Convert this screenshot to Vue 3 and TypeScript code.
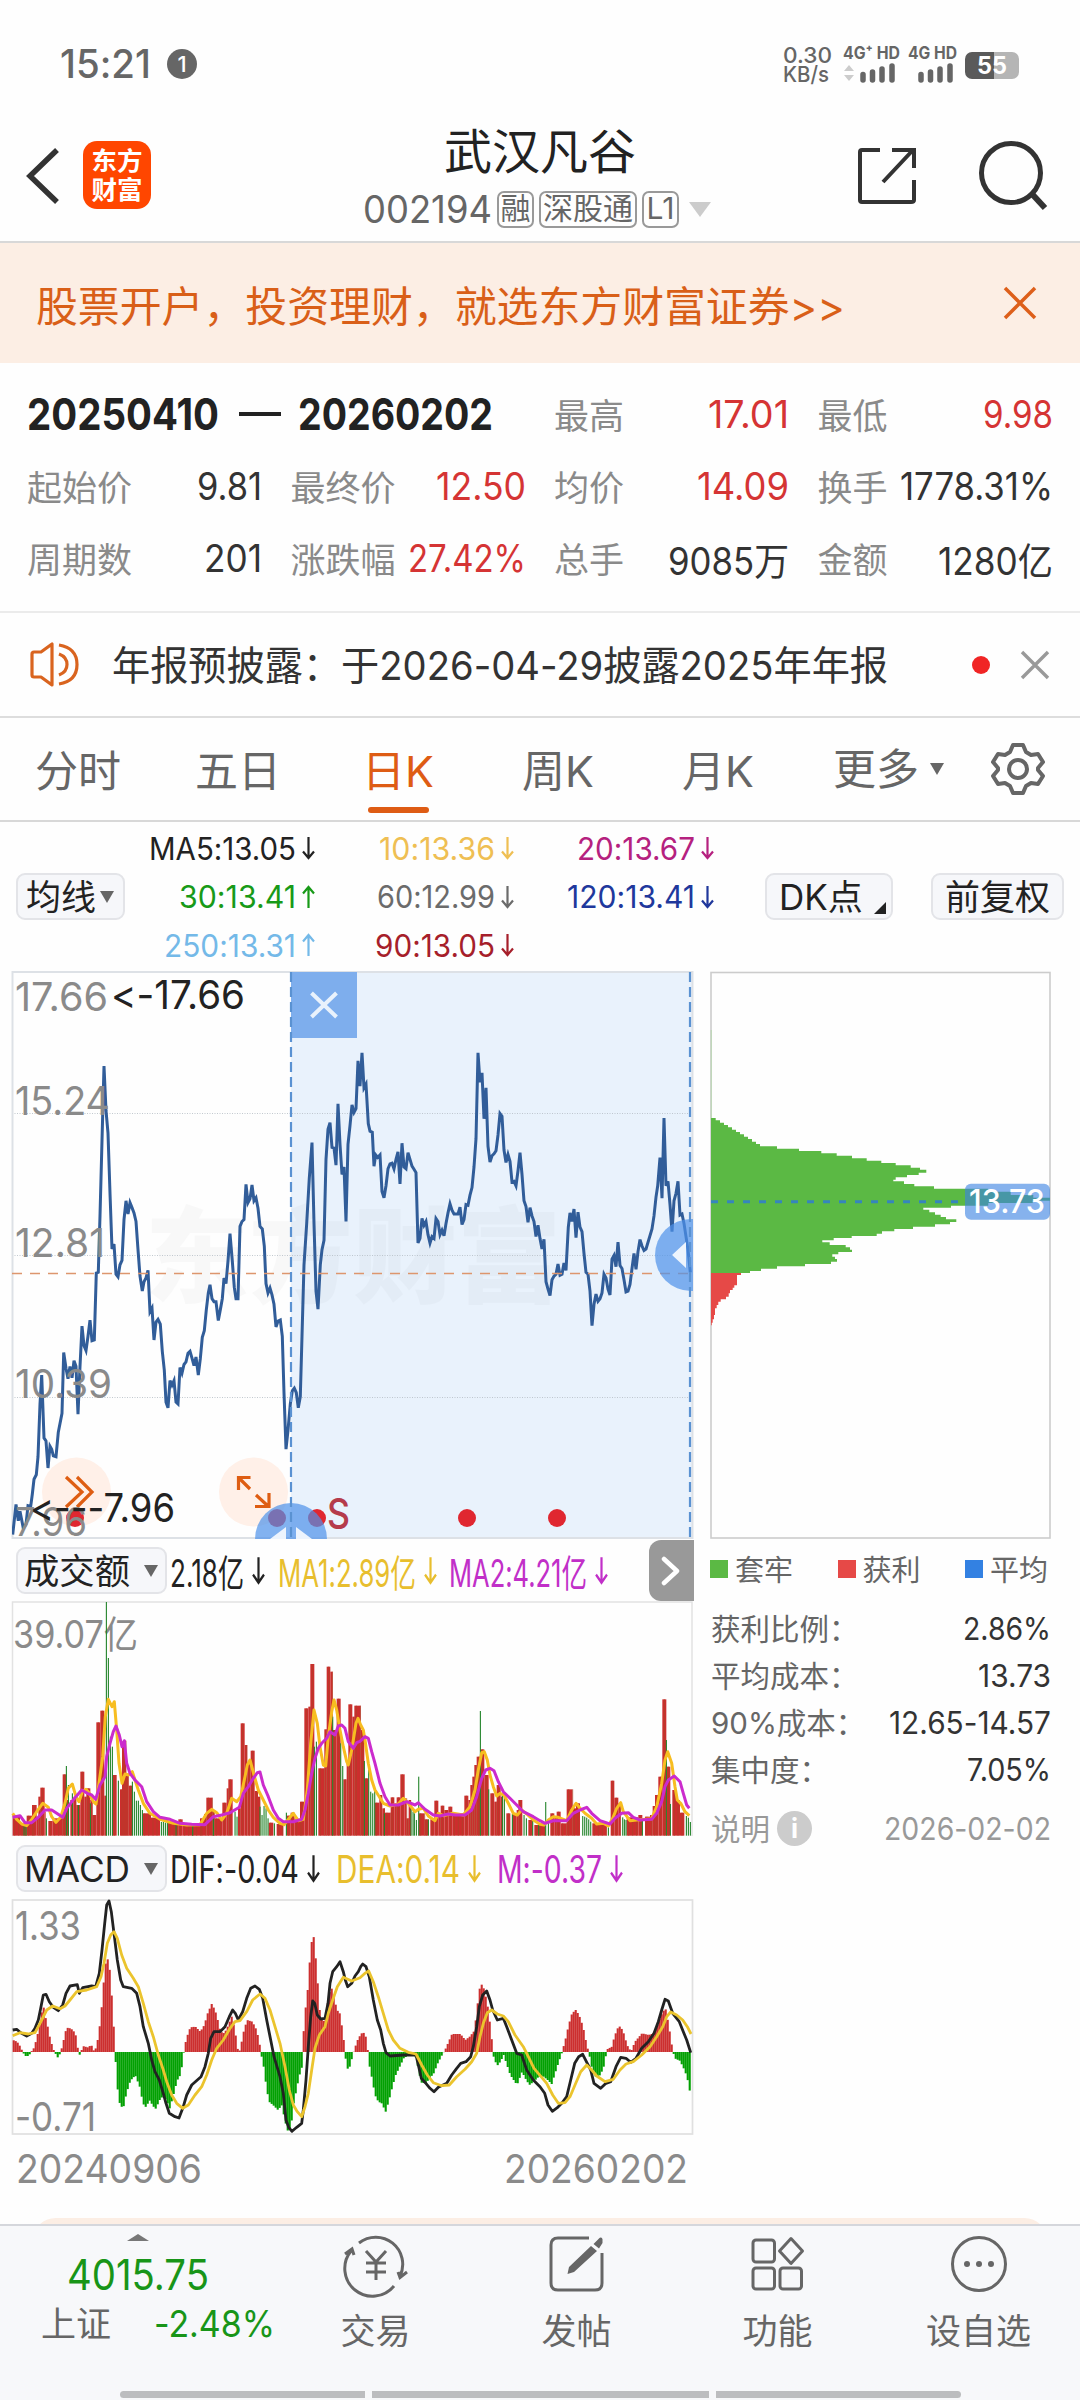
<script setup lang="ts">
import { h, type Directive, type FunctionalComponent } from 'vue'

/* Condenses or widens a run of text horizontally to the given width. */
const vFit: Directive<HTMLElement, number> = {
  mounted(el, { value }) {
    const natural = el.getBoundingClientRect().width
    if (!natural) return
    el.style.transform = `scaleX(${value / natural})`
    el.style.marginRight = `${value - natural}px`
  },
}

const Arrow: FunctionalComponent<{ up?: boolean; size?: number }> = (p) =>
  h(
    'svg',
    { width: 13, height: p.size ?? 24, viewBox: '0 0 13 24', preserveAspectRatio: 'none', style: 'flex:none' },
    [
      h('path', {
        d: p.up ? 'M6.5 23V2M1 8.5L6.5 2L12 8.5' : 'M6.5 1V22M1 15.5L6.5 22L12 15.5',
        fill: 'none',
        stroke: 'currentColor',
        'stroke-width': 2.2,
      }),
    ],
  )
Arrow.props = ['up', 'size']

interface Stat { label: string; value: string; w: number; red?: boolean }
const stats: Stat[] = [
  { label: '最高', value: '17.01', w: 81, red: true },
  { label: '最低', value: '9.98', w: 70, red: true },
  { label: '起始价', value: '9.81', w: 65 },
  { label: '最终价', value: '12.50', w: 90, red: true },
  { label: '均价', value: '14.09', w: 92, red: true },
  { label: '换手', value: '1778.31%', w: 153 },
  { label: '周期数', value: '201', w: 58 },
  { label: '涨跌幅', value: '27.42%', w: 118, red: true },
  { label: '总手', value: '9085万', w: 121 },
  { label: '金额', value: '1280亿', w: 115 },
]
const tabs = ['分时', '五日', '日K', '周K', '月K']
const averages = [
  { t: 'MA5:13.05', w: 147, c: '#222' },
  { t: '10:13.36', w: 116, c: '#efbf53' },
  { t: '20:13.67', w: 118, c: '#b5217f' },
  { t: '30:13.41', w: 117, c: '#189a18', up: true },
  { t: '60:12.99', w: 118, c: '#6b6b6b' },
  { t: '120:13.41', w: 128, c: '#20389c' },
  { t: '250:13.31', w: 132, c: '#74b9e8', up: true },
  { t: '90:13.05', w: 120, c: '#a61f2b' },
]
const volumeInfo = [
  { t: '2.18亿', w: 74, c: '#222' },
  { t: 'MA1:2.89亿', w: 138, c: '#e8be2e' },
  { t: 'MA2:4.21亿', w: 138, c: '#c12fc8' },
]
const macdInfo = [
  { t: 'DIF:-0.04', w: 129, c: '#222' },
  { t: 'DEA:0.14', w: 124, c: '#e8be2e' },
  { t: 'M:-0.37', w: 105, c: '#c12fc8' },
]
const legend = [
  { t: '套牢', c: '#5bb944' },
  { t: '获利', c: '#e64947' },
  { t: '平均', c: '#3381e2' },
]
const chips = [
  { label: '获利比例：', value: '2.86%', w: 88 },
  { label: '平均成本：', value: '13.73', w: 73 },
  { label: '90%成本：', value: '12.65-14.57', w: 162 },
  { label: '集中度：', value: '7.05%', w: 84 },
]

type Pt = [number, number]
const parse = (s: string): Pt[] => s.trim().split(/\s+/).map((p) => p.split(',').map(Number) as Pt)
const line = (s: string, y0: number, sy: number): string =>
  parse(s).map(([x, y]) => `${(x / 3).toFixed(1)},${(y0 + y / sy).toFixed(1)}`).join(' ')
/* The second half of each series is recorded from its own origin. */
const join = (a: string, b: string): string =>
  a + ' ' + parse(b).map(([x, y]) => `${x + 1020},${y}`).join(' ')

const price = line(join(
  `38,1527 48,1447 55,1490 60,1465 70,1510 78,1500 84,1450 92,1452 97,1420 102,1380 109,1368 114,1320 120,1180 125,1103 132,1270 138,1278 144,1350 150,1292 155,1300 160,1318 168,1320 175,1255 186,1205 191,1043 198,1085 204,1113 210,1080 216,1110 222,1065 228,1080 234,1207 240,1080 246,973 252,1025 258,1038 264,1000 270,957 276,1012 283,1010 289,832 295,830 300,680 306,480 312,282 318,400 324,460 330,620 336,768 342,755 348,835 354,842 360,810 366,798 372,690 378,640 384,675 390,645 396,658 402,672 408,695 414,770 420,840 427,880 432,855 438,845 444,825 450,935 456,925 462,1010 468,962 474,955 481,968 487,1040 493,1090 498,1175 504,1190 510,1118 516,1130 522,1118 528,1175 534,1180 540,1083 546,1098 552,1075 558,1068 564,1045 570,1040 576,1058 582,1078 588,1055 595,1103 601,1060 607,1003 613,985 619,930 625,885 630,863 636,900 642,908 648,908 655,958 661,930 667,900 672,845 678,860 684,800 690,727 697,800 703,870 708,900 714,900 720,708 726,695 732,690 738,596 744,645 750,635 756,598 762,640 768,632 774,660 780,708 787,715 793,760 798,860 804,885 810,872 816,890 822,915 828,975 834,960 841,957 847,1000 852,1150 858,1300 864,1250 871,1180 877,1145 883,1138 889,1150 895,1190 901,1160 906,1000 912,810 920,700 928,580 936,485 942,700 948,880 954,928 961,810 966,770 972,745 978,530 984,450 990,432 996,498 1002,500 1008,545 1014,382 1020,490 1026,570 1032,550 1038,695 1044,490 1050,440 1056,385 1062,405 1068,395`,
  `54,268 60,335 66,247 72,340 78,330 85,435 90,455 97,458 102,548 107,518 113,525 120,518 126,615 132,632 138,600 144,555 150,542 156,540 162,555 168,530 174,510 180,595 186,487 192,550 198,555 204,512 210,530 216,548 222,556 228,565 234,752 240,740 246,687 252,705 258,695 264,730 270,752 276,735 282,740 288,687 294,695 300,730 306,718 312,733 318,700 324,672 330,648 336,665 342,675 354,675 360,657 366,703 372,690 378,650 384,652 390,625 396,605 402,550 408,475 414,247 420,325 426,300 432,422 438,340 444,495 450,537 456,520 462,515 468,507 474,465 480,408 486,415 492,505 498,538 504,517 510,535 516,590 522,588 528,600 534,560 540,512 546,570 552,640 558,655 564,697 570,658 576,680 582,695 588,735 594,705 600,740 606,768 612,742 618,855 624,875 630,892 636,850 642,840 648,835 654,808 660,838 666,835 672,805 678,825 685,710 690,672 696,695 702,662 708,738 714,670 720,710 726,722 732,780 738,830 744,835 750,880 756,972 762,915 768,888 774,907 780,900 786,885 792,835 798,845 804,875 810,890 816,795 822,785 828,815 834,750 840,812 846,820 852,850 858,882 864,880 870,862 876,820 882,780 888,822 894,775 900,743 906,760 912,772 918,768 936,715 942,680 948,630 953,600 960,525 966,633 972,420 978,600 984,588 990,650 996,722 1002,640 1008,620 1014,588 1020,678 1026,675 1032,700 1038,735 1044,770 1051,830`,
), 960, 2.6576)

/* Turnover: steps of rising bars (917 = no bar), then single falling bars. */
const riseSteps = parse(join(
  `38,855 60,880 80,857 96,825 110,860 115,800 121,773 134,845 137,917 145,873 158,865 188,733 199,810 205,917 211,810 221,800 229,825 241,725 253,800 259,775 271,810 277,855 289,577 301,542 313,797 319,917 337,735 350,917 360,778 366,650 372,632 378,735 386,767 397,917 428,850 453,863 480,917 504,875 535,868 548,880 600,865 612,852 619,803 637,840 643,865 667,818 680,775 685,748 698,917 714,835 722,580 734,645 742,700 752,662 764,783 774,800 780,917 806,878 820,917 830,882 850,917 860,857 872,848 884,868 900,815 913,535 925,530 931,402 943,917 955,715 973,598 980,410 991,425 998,600 1010,506 1022,917 1030,748 1040,700`,
  `25,523 37,560 43,527 62,600 73,745 86,917 104,818 118,795 127,835 135,848 152,802 163,820 170,802 181,733 194,805 199,865 206,810 213,917 236,850 253,868 265,917 271,868 283,812 295,858 302,827 313,840 325,830 337,850 373,797 385,810 391,765 397,740 403,705 410,680 421,658 433,735 446,917 451,790 463,815 470,765 482,800 487,917 499,850 511,917 517,852 530,840 535,810 547,917 565,870 578,917 583,885 617,917 631,850 643,860 650,845 662,880 680,778 697,835 708,820 720,917 757,880 800,917 812,752 823,803 835,820 842,917 860,862 895,855 907,917 915,860 930,855 938,828 945,795 955,740 967,508 979,710 991,917 997,780 1008,810 1020,848 1033,917 1053,917`,
))
const falls = parse(join(
  `72,885 78,880 139,865 199,708 205,765 217,790 235,825 271,820 319,216 325,384 331,620 337,650 355,752 397,755 403,785 409,812 415,812 421,825 427,840 484,876 490,876 496,878 502,878 528,882 578,888 640,865 705,845 711,860 780,830 786,855 792,828 798,835 804,865 823,880 859,848 943,650 949,635 998,560 1022,640 1028,708`,
  `73,693 86,720 92,785 98,790 104,775 133,850 213,820 219,845 223,850 229,870 236,740 265,868 421,543 446,778 487,795 493,800 517,852 552,855 559,865 578,870 596,885 617,816 625,870 728,858 734,860 740,863 746,868 752,875 805,892 848,862 853,868 858,870 907,872 979,630 991,822 1039,858 1045,863 1051,876`,
))
const vy = (y: number): number => 1530 + y / 3
const rises = riseSteps
  .slice(0, -1)
  .map(([x, y], i) => ({ x: x / 3, y: vy(y), w: (riseSteps[i + 1][0] - x) / 3, h: (917 - y) / 3 }))
  .filter((b) => b.h > 0)
/* Seams where one bar overlaps the next. */
const seams = rises.flatMap((b) => {
  const out: { x: number; y: number; h: number }[] = []
  for (let k = 0; k < b.w - 1; k += 4) out.push({ x: b.x + k + 1.5, y: b.y, h: b.h })
  return out
})
const ma1 = line(join(
  `38,850 50,868 65,882 80,887 95,868 110,845 128,820 145,832 155,860 168,877 182,862 195,820 205,775 217,762 228,800 237,815 247,785 258,778 268,790 280,815 288,822 297,760 308,680 316,560 325,508 336,530 343,515 350,600 357,700 366,760 375,732 386,735 397,725 405,750 415,780 430,820 450,850 480,868 520,880 560,885 600,884 620,850 635,838 650,848 665,870 680,850 695,805 710,815 722,800 735,740 742,705 750,690 762,735 775,780 790,810 805,840 820,862 840,880 852,884 870,862 880,850 895,872 910,868 922,780 932,640 942,540 952,580 960,650 970,705 977,708 985,620 995,545 1002,510 1010,540 1020,600 1030,650 1040,695 1045,705 1055,660 1068,580 1074,565`,
  `62,585 70,600 75,630 85,700 95,750 105,780 118,800 130,820 150,828 175,822 190,805 205,820 225,845 235,838 250,835 265,858 285,872 295,850 310,857 340,850 370,855 390,830 405,780 415,720 425,668 433,665 442,690 450,735 460,770 470,798 480,790 492,795 505,820 520,850 532,855 545,840 560,852 580,870 600,883 612,885 625,870 640,860 655,862 680,872 695,840 708,820 720,835 735,850 755,865 770,882 790,880 805,888 818,865 830,835 842,818 850,845 870,872 890,870 935,866 950,830 965,760 975,690 983,665 995,700 1005,770 1012,810 1022,820 1035,845 1048,857`,
), 1530, 3)
const ma2 = line(join(
  `38,862 60,857 75,878 95,878 115,862 135,840 155,840 170,850 188,862 200,835 225,803 245,780 262,790 275,795 287,808 300,765 315,740 320,680 330,640 340,605 348,588 358,615 366,650 373,632 380,700 390,730 405,750 425,770 440,815 460,845 480,862 510,868 540,880 575,883 615,884 640,860 665,855 690,848 718,832 730,790 745,770 760,745 772,728 780,726 790,765 805,800 820,840 835,865 850,875 880,875 905,868 915,840 925,790 935,730 945,685 955,655 965,640 980,625 990,605 1005,615 1015,588 1025,585 1035,595 1045,635 1060,655 1070,638`,
  `60,634 75,620 85,625 95,665 105,700 120,760 135,800 150,825 175,825 200,815 225,825 235,818 255,838 280,855 300,858 325,852 345,855 375,855 395,840 410,800 425,745 437,720 450,715 462,722 475,755 490,785 510,805 530,825 550,845 580,860 600,872 615,880 640,872 680,872 700,850 720,840 740,832 755,850 780,872 810,882 825,865 845,850 865,848 880,862 900,870 935,868 950,850 965,815 975,770 985,750 1003,738 1020,755 1030,790 1040,825 1048,835`,
), 1530, 3)

/* MACD histogram, sampled to two-pixel columns. */
const histogram = parse(join(
  `38,600 50,605 60,620 67,636 75,648 85,648 92,636 100,625 108,600 118,555 128,492 135,530 142,560 150,600 160,630 165,640 172,652 180,640 188,610 195,575 203,562 218,570 228,590 234,640 240,646 247,618 262,622 273,615 283,638 292,600 300,545 306,480 314,375 322,358 330,400 336,500 342,590 345,650 350,730 356,785 368,808 378,760 390,722 405,706 418,740 428,790 435,802 448,782 465,808 478,780 490,765 502,790 508,805 518,770 530,722 540,705 546,670 552,622 560,590 570,562 585,560 600,575 612,555 622,520 634,492 644,510 652,540 660,575 672,580 682,560 694,530 704,570 710,620 716,640 722,615 730,575 740,540 756,545 766,565 775,595 782,640 790,680 798,740 806,785 818,795 833,810 845,795 853,840 865,882 873,850 880,790 888,750 896,710 905,680 908,600 914,520 922,450 930,340 938,272 944,330 952,430 958,510 966,545 975,540 985,470 992,438 1000,470 1010,510 1018,520 1028,580 1034,640`,
  `20,688 28,680 36,650 42,628 52,600 60,585 68,575 76,590 82,630 88,680 96,720 104,765 114,785 124,790 136,815 146,780 156,740 166,705 178,680 190,655 205,645 218,640 228,655 236,700 244,728 256,730 268,715 280,700 292,670 305,645 315,628 325,605 335,582 360,582 375,600 388,590 400,575 408,530 416,450 426,430 434,460 444,510 452,580 460,650 470,678 480,665 490,645 500,675 510,705 530,735 545,695 555,715 567,735 580,725 595,710 610,710 622,720 634,732 644,700 652,675 664,640 675,600 685,555 695,520 706,510 716,525 728,560 738,610 748,650 758,700 768,712 780,705 790,680 800,628 815,620 822,590 832,565 840,558 850,580 860,615 872,635 884,605 895,592 905,580 925,585 940,580 950,560 960,530 975,503 985,555 995,620 1003,655 1018,662 1028,680 1040,710 1050,762 1056,762`,
))
const columns: { x: number; y: number; h: number; c: string }[] = []
for (let x = 38, k = 0; x < 2072; x += 6) {
  while (k < histogram.length - 2 && histogram[k + 1][0] < x + 2) k++
  const [ax, ay] = histogram[k]
  const [bx, by] = histogram[k + 1]
  const y = ay + ((by - ay) * (x + 2 - ax)) / (bx - ax)
  const up = y < 636
  columns.push({ x: x / 3, y: 1840 + (up ? y : 636) / 3, h: Math.abs(636 - y) / 3, c: up ? '#cc2f2f' : '#02a002' })
}
const dif = line(join(
  `38,570 50,568 62,578 80,588 95,580 105,565 115,540 122,505 130,465 138,463 148,485 160,502 175,512 188,495 198,460 210,438 232,434 238,460 248,443 275,438 287,440 298,400 306,330 314,250 320,195 327,183 334,215 342,280 352,360 362,420 370,440 395,445 410,460 420,500 430,560 445,610 455,660 465,695 478,720 490,760 498,790 508,820 525,830 537,834 550,800 560,765 575,735 603,710 615,680 625,640 632,595 642,575 660,575 675,560 688,530 698,510 706,520 715,540 728,515 740,475 752,445 765,438 778,448 788,475 800,540 812,600 822,650 840,710 850,760 858,840 866,862 876,874 890,862 905,850 910,810 918,720 925,620 932,530 938,483 944,490 952,525 962,537 975,535 984,490 990,430 998,395 1010,380 1020,365 1030,395 1036,420 1043,440 1055,430 1065,408 1075,395`,
  `62,380 68,372 78,380 88,410 100,480 112,540 122,570 130,610 138,638 150,648 190,645 228,645 236,680 244,715 256,728 270,745 282,755 295,742 320,730 335,705 350,685 362,670 378,665 392,650 400,620 410,560 418,500 428,465 440,453 450,480 458,510 472,540 490,535 500,560 515,600 530,640 545,645 560,690 580,720 600,740 614,760 624,795 637,814 652,803 665,790 680,770 692,720 704,670 716,650 728,643 742,670 752,690 762,730 782,745 798,730 812,725 828,680 842,652 858,655 872,667 888,655 905,625 925,605 942,580 955,545 965,510 975,478 985,483 998,520 1018,545 1030,575 1040,600 1052,638`,
), 1840, 3)
const dea = line(join(
  `38,587 60,578 85,582 105,578 120,550 140,510 158,498 180,506 195,498 210,480 230,455 260,450 290,440 303,410 312,370 322,310 332,285 342,275 352,295 365,345 380,385 400,415 415,440 430,490 445,545 460,590 475,645 490,690 500,725 515,765 530,790 548,805 565,795 585,765 605,740 620,705 635,660 650,625 670,600 690,565 705,545 720,542 740,515 758,480 780,462 795,475 810,510 825,560 840,610 855,680 868,750 880,795 892,815 905,830 915,800 925,760 935,690 945,625 958,585 975,560 985,520 998,480 1012,440 1030,412 1055,423`,
  `60,413 75,400 86,393 100,425 115,470 130,520 145,570 160,600 180,625 205,637 228,642 245,675 262,705 280,728 305,737 328,735 350,710 375,688 395,665 410,640 420,590 430,550 442,518 455,510 472,522 490,528 505,545 525,585 550,620 565,650 582,685 605,712 620,730 638,765 655,790 675,788 690,770 705,735 722,695 740,675 755,690 770,708 795,725 820,718 840,690 858,672 880,665 905,645 930,620 950,590 968,560 980,530 992,516 1010,525 1028,540 1042,560 1053,582`,
), 1840, 3)

/* Cost distribution: top of each row and its right end. */
const steps = (s: string, end: number): string => {
  const p = parse(s)
  let d = `M711 ${960 + p[0][0] / 3}`
  p.forEach(([y, x], i) => {
    const next = i + 1 < p.length ? p[i + 1][0] : end
    d += `H${(690 + x / 3).toFixed(1)}V${(960 + next / 3).toFixed(1)}`
  })
  return d + 'H711Z'
}
const trapped = steps('474,77 481,90 488,102 495,114 502,126 509,138 516,150 523,162 530,174 537,186 545,198 552,210 559,261 566,327 573,394 580,440 587,486 595,530 602,574 609,617 616,662 623,690 629,709 638,686 645,651 652,617 659,610 664,642 672,673 679,732 686,895 695,962 705,1030 713,1080 722,1028 729,895 737,783 743,700 749,718 757,735 764,752 771,768 778,799 786,780 793,735 800,669 807,613 814,576 821,560 828,485 834,431 841,397 847,419 855,467 862,480 869,486 876,445 883,427 890,435 897,441 905,423 912,345 919,261 926,213 933,180', 939)
const profit = steps('939,153 945,141 976,133 983,128 990,120 1000,116 1010,108 1018,92 1025,85 1035,80 1045,75 1065,72 1078,68 1088,65', 1096)
const dots = [75, 277, 317, 467, 557]
</script>

<template>
  <div class="page">
    <header class="status">
      <span v-fit="91" class="fit clock">15:21</span>
      <span class="count">1</span>
      <div class="status-right">
        <div class="speed"><span v-fit="49" class="fit">0.30</span><span v-fit="46" class="fit">KB/s</span></div>
        <div class="sim">
          <span v-fit="57" class="fit">4G⁺ HD</span>
          <svg width="56" height="20" viewBox="0 0 56 20"><path d="M1 8L6 2L11 8ZM1 12L6 18L11 12Z" fill="#ccc" /><path d="M20 11.500V17M29.500 9V17M39 6V17M49 3V17" stroke="#666" stroke-width="5.500" stroke-linecap="round" /></svg>
        </div>
        <div class="sim second">
          <span v-fit="49" class="fit">4G HD</span>
          <svg width="38" height="20" viewBox="0 0 38 20"><path d="M4 11.500V17M13.500 9V17M23 6V17M33 3V17" stroke="#666" stroke-width="5.500" stroke-linecap="round" /></svg>
        </div>
        <div class="battery"><span v-fit="30" class="fit">55</span></div>
      </div>
    </header>

    <nav class="title-bar">
      <svg class="back" width="34" height="58" viewBox="0 0 34 58"><path d="M31 3L4 29L31 55" fill="none" stroke="#333" stroke-width="5.500" /></svg>
      <div class="logo"><span>东方</span><span>财富</span></div>
      <div class="title">
        <h1>武汉凡谷</h1>
        <div class="code">
          <span v-fit="129" class="fit num">002194</span>
          <span class="tag">融</span><span class="tag wide">深股通</span><span class="tag">L1</span>
          <i class="tri pale" />
        </div>
      </div>
      <svg class="share" width="60" height="60" viewBox="0 0 60 60" fill="none" stroke="#333" stroke-width="4"><path d="M23 4H5Q3 4 3 6V54Q3 56 5 56H54Q57 56 57 54V34M26 36L56 4M35 4H57V22" /></svg>
      <svg class="search" width="72" height="72" viewBox="0 0 72 72" fill="none" stroke="#333" stroke-width="5"><circle cx="34" cy="34" r="29.500" /><path d="M56 56L68 69" stroke-width="6" /></svg>
    </nav>

    <section class="promo">
      <span v-fit="809" class="fit">股票开户，投资理财，就选东方财富证券&gt;&gt;</span>
      <svg width="34" height="34" viewBox="0 0 34 34"><path d="M2 2L32 32M32 2L2 32" stroke="#dd5f1a" stroke-width="3.500" /></svg>
    </section>

    <section class="stats">
      <div class="range"><b v-fit="192" class="fit">20250410</b><i /><b v-fit="195" class="fit">20260202</b></div>
      <div v-for="s in stats" :key="s.label" class="stat">
        <span class="label">{{ s.label }}</span>
        <span v-fit="s.w" class="fit value" :class="{ red: s.red }">{{ s.value }}</span>
      </div>
    </section>

    <section class="notice">
      <svg width="52" height="46" viewBox="0 0 52 46" fill="none" stroke="#d9641f" stroke-width="3.200"><path d="M3 12Q3 10 5 10H12L23 2V43L12 35H5Q3 35 3 33Z" stroke-linejoin="round" /><path d="M30 12Q38 15 38 22.500Q38 30 30 33M30 3Q48 6 48 22.500Q48 39 30 42" /></svg>
      <span v-fit="776" class="fit">年报预披露：于2026-04-29披露2025年年报</span>
      <i class="dot" />
      <svg class="x" width="30" height="30" viewBox="0 0 30 30"><path d="M2 2L28 28M28 2L2 28" stroke="#999" stroke-width="3.400" /></svg>
    </section>

    <nav class="tabs">
      <span v-for="t in tabs" :key="t" class="tab" :class="{ on: t === '日K' }">{{ t }}</span>
      <span class="more">更多<i class="tri small" /></span>
      <svg width="54" height="54" viewBox="0 0 54 54" fill="none" stroke="#666" stroke-width="4"><path d="M22 3H32L35 10L40 13L47 12L52 20L47 26V28L52 34L47 42L40 41L35 44L32 51H22L19 44L14 41L7 42L2 34L7 28V26L2 20L7 12L14 13L19 10Z" stroke-linejoin="round" /><circle cx="27" cy="27" r="9" /></svg>
    </nav>

    <section class="averages">
      <button class="pill ma">均线<i class="tri small" /></button>
      <div class="grid">
        <div v-for="a in averages" :key="a.t" :style="{ color: a.c }"><span v-fit="a.w" class="fit">{{ a.t }}</span><Arrow :up="a.up" /></div>
      </div>
      <button class="pill dk">DK点<i /></button>
      <button class="pill adj">前复权</button>
    </section>

    <main class="charts">
      <div class="left">
        <svg width="700" height="570" viewBox="0 970 700 570" class="chart">
          <defs><clipPath id="plot"><rect x="12" y="971" width="681" height="568" /></clipPath></defs>
          <rect x="291" y="972" width="401" height="566" fill="#e9f2fc" />
          <text x="145" y="1295" class="mark" textLength="416" lengthAdjust="spacingAndGlyphs">东方财富</text>
          <path d="M12 1113.500H692M12 1255.500H692M12 1397.500H692" stroke="#b4bcc4" stroke-width="1" stroke-dasharray="1 1.500" opacity=".8" />
          <rect x="12.500" y="972" width="680" height="566" fill="none" stroke="#dde1e6" stroke-width="2" />
          <g clip-path="url(#plot)">
            <circle cx="76.500" cy="1492" r="34.500" fill="#fff0e8" />
            <circle cx="253.500" cy="1492" r="34.500" fill="#fff0e8" />
            <polyline :points="price" fill="none" stroke="#315d99" stroke-width="3" />
            <path d="M66 1477L82 1492L66 1507M77 1477L92 1492L77 1507M250.500 1477.500H238.500V1490M239 1478L250 1489M255 1506.500H269V1493M268 1506L256 1495" fill="none" stroke="#de5d12" stroke-width="3.200" />
            <path d="M12 1273.500H692" stroke="#dd966e" stroke-width="1.500" stroke-dasharray="10 8" />
            <circle v-for="d in dots" :key="d" :cx="d" cy="1518" r="9" fill="#e02730" />
            <circle cx="291" cy="1539" r="36" fill="#4d91e9" opacity=".7" />
            <circle cx="691" cy="1255" r="36" fill="#4d91e9" opacity=".7" />
            <path d="M672 1255L686 1242V1268ZM270 1539L286 1527V1539ZM312 1539L296 1527V1539Z" fill="#edf4fd" />
            <text x="327" y="1529" font-size="42" font-weight="500" fill="#b53b4b" textLength="23" lengthAdjust="spacingAndGlyphs">S</text>
          </g>
          <rect x="291" y="972" width="66" height="66" fill="#7eaeed" />
          <path d="M311.500 993L336.500 1017M336.500 993L311.500 1017" stroke="#e9f2fc" stroke-width="4" />
          <path d="M291 972V1538M690 972V1538" stroke="#5a92d2" stroke-width="2.200" stroke-dasharray="10 5" />
          <g class="scale">
            <text x="15" y="1011" textLength="93" lengthAdjust="spacingAndGlyphs">17.66</text>
            <text x="15" y="1115" textLength="95" lengthAdjust="spacingAndGlyphs">15.24</text>
            <text x="15" y="1257" textLength="90" lengthAdjust="spacingAndGlyphs">12.81</text>
            <text x="15" y="1398" textLength="97" lengthAdjust="spacingAndGlyphs">10.39</text>
            <text x="15" y="1536" textLength="72" lengthAdjust="spacingAndGlyphs">7.96</text>
            <text x="111" y="1009" class="dark" textLength="134" lengthAdjust="spacingAndGlyphs">&lt;-17.66</text>
            <text x="30" y="1522" class="dark" textLength="145" lengthAdjust="spacingAndGlyphs">&lt;---7.96</text>
          </g>
        </svg>

        <div class="info">
          <button class="pill pick"><span v-fit="106" class="fit">成交额</span><i class="tri small" /></button>
          <div v-for="v in volumeInfo" :key="v.t" class="reading" :style="{ color: v.c }"><span v-fit="v.w" class="fit">{{ v.t }}</span><Arrow :size="29" /></div>
          <span class="next"><svg width="20" height="30" viewBox="0 0 20 30"><path d="M3 3L16 15L3 27" fill="none" stroke="#fff" stroke-width="4.500" stroke-linecap="round" stroke-linejoin="round" /></svg></span>
        </div>

        <svg width="700" height="237" viewBox="0 1601 700 237" class="chart">
          <path d="M12.500 1836V1602H692V1836" fill="none" stroke="#e2e2e2" stroke-width="1.500" />
          <text x="13" y="1648" class="cap" textLength="125" lengthAdjust="spacingAndGlyphs">39.07亿</text>
          <rect v-for="(b, i) in rises" :key="i" :x="b.x" :y="b.y" :width="b.w" :height="b.h" fill="#cd2d2d" />
          <rect v-for="(b, i) in seams" :key="'s' + i" :x="b.x" :y="b.y" width="1" :height="b.h" fill="#ad402a" opacity=".75" />
          <rect v-for="([x, y], i) in falls" :key="'f' + i" :x="x / 3 - 0.500" :y="vy(y)" width="1.100" :height="(917 - y) / 3" fill="#23842a" />
          <polyline :points="ma1" fill="none" stroke="#f7bd20" stroke-width="3" stroke-linejoin="round" />
          <polyline :points="ma2" fill="none" stroke="#cb2bcd" stroke-width="3" stroke-linejoin="round" />
        </svg>

        <div class="info macd">
          <button class="pill pick"><span v-fit="106" class="fit">MACD</span><i class="tri small" /></button>
          <div v-for="v in macdInfo" :key="v.t" class="reading" :style="{ color: v.c }"><span v-fit="v.w" class="fit">{{ v.t }}</span><Arrow :size="29" /></div>
        </div>

        <svg width="700" height="237" viewBox="0 1899 700 237" class="chart">
          <rect x="12.500" y="1900" width="680" height="234" fill="none" stroke="#e0e0e0" stroke-width="1.700" />
          <rect v-for="(c, i) in columns" :key="i" :x="c.x" :y="c.y" width="2.100" :height="c.h" :fill="c.c" />
          <polyline :points="dif" fill="none" stroke="#222" stroke-width="2.800" stroke-linejoin="round" />
          <polyline :points="dea" fill="none" stroke="#ebc42d" stroke-width="2.800" stroke-linejoin="round" />
          <g class="scale">
            <text x="15" y="1940" textLength="66" lengthAdjust="spacingAndGlyphs">1.33</text>
            <text x="15" y="2131" textLength="81" lengthAdjust="spacingAndGlyphs">-0.71</text>
          </g>
        </svg>
        <div class="dates"><span v-fit="186" class="fit">20240906</span><span v-fit="184" class="fit">20260202</span></div>
      </div>

      <aside class="right">
        <svg width="345" height="570" viewBox="708 970 345 570" class="chart">
          <rect x="711" y="972.500" width="339" height="565.500" fill="none" stroke="#ccc" stroke-width="1.600" />
          <path d="M711.200 1030V1120" stroke="#b8d8b0" stroke-width="1" />
          <path :d="trapped" fill="#5bb944" />
          <path :d="profit" fill="#e64947" />
          <path d="M711 1201.700H962" stroke="#3685bd" stroke-width="3" stroke-dasharray="7 9" />
          <rect x="965" y="1183.700" width="85" height="36" rx="6" fill="#3b82e2" opacity=".62" />
          <text x="969" y="1213" font-size="32" font-weight="500" fill="#fff" textLength="76" lengthAdjust="spacingAndGlyphs">13.73</text>
        </svg>
        <div class="legend"><span v-for="l in legend" :key="l.t"><i :style="{ background: l.c }" /><em>{{ l.t }}</em></span></div>
        <div v-for="c in chips" :key="c.label" class="chip"><span class="key">{{ c.label }}</span><span v-fit="c.w" class="fit val">{{ c.value }}</span></div>
        <div class="chip foot"><span class="key">说明</span><i>i</i><span v-fit="167" class="fit">2026-02-02</span></div>
      </aside>
    </main>

    <div class="peek"><i /></div>
    <footer class="dock">
      <div class="index">
        <i class="tri up" />
        <span v-fit="142" class="fit big">4015.75</span>
        <div><span class="name">上证</span><span v-fit="121" class="fit pct">-2.48%</span></div>
      </div>
      <div class="item">
        <svg width="66" height="60" viewBox="0 0 66 60" fill="none" stroke="#666" stroke-width="3" overflow="visible"><path d="M16 9A27 27 0 0 1 57 42M64 38L57 43.500L55 38M51 52A27 27 0 0 1 8 17M2 20L9 15L11 21" /><path d="M23 17L33 28L43 17M33 28V46M23 29H43M23 38H43" /></svg>
        <span>交易</span>
      </div>
      <div class="item">
        <svg width="60" height="60" viewBox="0 0 60 60"><path d="M42 4H11Q4 4 4 11V49Q4 56 11 56H48Q55 56 55 49V19" fill="none" stroke="#666" stroke-width="3" /><path d="M44 12L50 17L27 38L20.500 40L22 33ZM46.500 10L52 4.500Q54 2.500 55.500 5V9L52 14.500Z" fill="#666" /></svg>
        <span>发帖</span>
      </div>
      <div class="item">
        <svg width="60" height="60" viewBox="0 0 60 60" fill="none" stroke="#666" stroke-width="3"><rect x="5" y="6" width="21.500" height="22" rx="3" /><rect x="5" y="34" width="21.500" height="21" rx="3" /><rect x="32" y="34" width="21.500" height="21" rx="3" /><path d="M43 4.500L54.500 17L43 29.500L31.500 17Z" stroke-linejoin="round" /></svg>
        <span>功能</span>
      </div>
      <div class="item">
        <svg width="60" height="60" viewBox="0 0 60 60"><circle cx="30" cy="30" r="26.500" fill="none" stroke="#666" stroke-width="3" /><g fill="#666"><circle cx="18" cy="30" r="3" /><circle cx="30" cy="30" r="3" /><circle cx="42" cy="30" r="3" /></g></svg>
        <span>设自选</span>
      </div>
    </footer>
    <div class="home"><i /><i class="mid" /><i /></div>
  </div>
</template>

<style>
body { margin: 0; background: #fff; }
</style>

<style scoped>
.page { width: 1080px; height: 2400px; overflow: hidden; background: #fefefe; display: flex; flex-direction: column; font-family: Inter, "Noto Sans CJK SC", sans-serif; font-feature-settings: "calt" 0; color: #333; }
.page * { box-sizing: border-box; }
svg { display: block; flex: none; }
svg text { font-family: Inter, "Noto Sans CJK SC", sans-serif; }
.fit { display: inline-block; white-space: nowrap; transform-origin: left center; flex: none; }
.tri { display: block; border: 11px solid transparent; border-top: 15px solid #ccc; border-bottom: 0; }
.tri.small { border-width: 12px 7.500px 0; border-top-color: #666; }
.tri.up { border: 11px solid transparent; border-top: 0; border-bottom: 7px solid #777; }

.status { height: 110px; flex: none; padding: 46px 62px 0 60px; display: flex; align-items: flex-start; color: #666; }
.clock { font-size: 39px; line-height: 36px; font-weight: 500; }
.count { margin: 3px 0 0 16px; width: 30px; height: 30px; border-radius: 50%; background: #666; color: #fff; font-size: 22px; line-height: 30px; text-align: center; font-weight: 500; }
.status-right { margin-left: auto; display: flex; }
.speed { width: 60px; display: flex; flex-direction: column; align-items: flex-start; font-size: 22px; line-height: 19px; font-weight: 500; }
.sim { width: 65px; font-size: 17px; line-height: 14px; font-weight: 700; }
.sim svg { margin-top: 3px; }
.sim.second svg { margin-left: 9px; }
.sim.second { width: 57px; }
.battery { margin-top: 6px; width: 54px; height: 27px; border-radius: 7px; background: linear-gradient(90deg, #5a5a5a 54%, #b5b5b5 54%); color: #fff; font-size: 24px; line-height: 27px; font-weight: 700; padding-left: 12px; margin-right: -1px; }

.title-bar { height: 133px; flex: none; display: flex; border-bottom: 2px solid #d8d8d8; }
.back { margin: 37px 0 0 26px; }
.logo { margin: 31px 0 0 23px; width: 68px; height: 68px; border-radius: 14px; background: #ff4600; color: #fff; font-size: 25.500px; font-weight: 700; line-height: 29px; display: flex; flex-direction: column; align-items: center; justify-content: center; }
.title { margin-left: 180px; width: 418px; text-align: center; }
.title h1 { margin: 12px 0 0; font-size: 48px; line-height: 60px; font-weight: 400; color: #222; }
.code { margin-top: 6px; height: 42px; display: flex; align-items: center; justify-content: flex-start; color: #666; padding-left: 32px; }
.num { font-size: 38px; }
.tag { height: 37px; min-width: 37px; margin-left: 5px; border: 2px solid #999; border-radius: 7px; font-size: 30px; line-height: 31px; text-align: center; }
.tag.wide { width: 98px; }
.tri.pale { margin-left: 10px; }
.share { margin: 36px 0 0 108px; }
.search { margin: 29px 0 0 60px; }

.promo { height: 120px; flex: none; background: #fceee4; color: #d95f18; font-size: 42px; display: flex; align-items: center; justify-content: space-between; padding: 0 43px 0 36px; }
.promo svg { margin-bottom: 1px; }

.stats { height: 250px; flex: none; border-bottom: 2px solid #ebebeb; padding: 16px 28px 0; display: grid; grid-template-columns: repeat(4, 233px); column-gap: 30.500px; grid-auto-rows: 72px; }
.range { grid-column: span 2; display: flex; align-items: center; font-size: 44px; color: #222; padding-bottom: 2px; margin-left: -1px; }
.range i { width: 42px; height: 4px; background: #222; margin: 0 17px 0 20px; }
.stat { display: flex; align-items: center; justify-content: space-between; margin-right: -1px; }
.label { font-size: 35px; color: #8a8a8a; margin: 0 0 3px -1px; }
.value { font-size: 37.500px; margin-bottom: 1px; }
.red { color: #d53434; }

.notice { height: 105px; flex: none; border-bottom: 2px solid #ddd; padding: 0 30px 0 29px; display: flex; align-items: center; font-size: 39.500px; }
.notice .fit { margin-left: 31px; margin-bottom: 4px; }
.dot { width: 18px; height: 18px; border-radius: 50%; background: #f02525; margin-left: auto; margin-right: 30px; }

.tabs { height: 104px; flex: none; border-bottom: 2px solid #d8d8d8; display: flex; align-items: stretch; font-size: 43px; line-height: 106px; color: #666; }
.tab { width: 160px; text-align: center; position: relative; left: -2px; }
.on { color: #de5c14; }
.on::after { content: ""; position: absolute; left: 50px; bottom: 7px; width: 61px; height: 6px; border-radius: 3px; background: #de5c14; }
.more { margin-left: 33px; display: flex; align-items: center; gap: 11px; width: 158px; }
.tabs svg { align-self: center; }

.averages { height: 148px; flex: none; display: flex; padding-left: 16px; }
.pill { height: 47px; border: 2px solid #e3e4e8; border-radius: 9px; background: #f6f7fa; font: inherit; font-size: 35px; line-height: 40px; color: #222; display: flex; align-items: center; padding: 0; }
.ma { width: 109px; margin-top: 51px; padding-left: 8px; gap: 4px; }
.averages .grid { width: 589px; display: grid; grid-template-columns: 190px 199px 200px; grid-auto-rows: 48.500px; padding-top: 2px; font-size: 31px; }
.grid div { display: flex; align-items: center; justify-content: flex-end; gap: 6px; }
.dk { width: 128px; margin: 51px 0 0 51px; padding-left: 12px; justify-content: space-between; }
.dk i { border: 6px solid transparent; border-right-color: #222; border-bottom-color: #222; align-self: flex-end; margin: 0 5px 4px 0; }
.adj { width: 133px; margin: 51px 0 0 38px; justify-content: center; }

.charts { height: 1248px; flex: none; display: flex; }
.left { width: 708px; }
.right { width: 345px; }
.scale text { font-size: 40px; fill: #8a8a8a; }
.scale .dark { fill: #222; }
.cap { font-size: 38px; fill: #8a8a8a; }
.mark { font-family: "Noto Sans CJK SC", sans-serif; font-size: 104px; font-weight: 900; fill: #000; opacity: .02; }
.info { height: 61px; padding-left: 16px; display: flex; align-items: center; }
.pick { width: 151px; padding-left: 6px; gap: 14px; margin-right: 3px; }
.reading { display: flex; align-items: center; gap: 8px; margin-right: 12.500px; font-size: 38px; }
.macd .reading { gap: 8px; margin-right: 16px; }
.next { width: 45px; height: 61px; border-radius: 12px 0 0 12px; background: #999; margin-left: 28px; display: flex; align-items: center; justify-content: center; }
.dates { display: flex; justify-content: space-between; padding: 8px 20px 0 16px; font-size: 40px; color: #8a8a8a; }

.legend { height: 58px; padding-left: 2px; display: flex; font-size: 29px; color: #666; align-items: center; }
.legend span { width: 127.500px; display: flex; align-items: center; gap: 7px; white-space: nowrap; flex: none; }
.legend i { width: 18px; height: 18px; }
.legend em { font-style: normal; margin-bottom: 3px; }
.chip { height: 47px; margin: 0 2px 0 3px; padding-top: 13px; display: flex; align-items: center; justify-content: space-between; font-size: 29.500px; color: #666; white-space: nowrap; }
.key { margin-bottom: 2px; }
.val { font-size: 31.500px; color: #333; }
.foot { height: 60px; padding-top: 24px; color: #999; justify-content: flex-start; }
.foot i { width: 35px; height: 35px; border-radius: 50%; background: #ccc; color: #fff; font: 700 26px/35px Inter, sans-serif; text-align: center; margin: 0 auto 0 7px; }
.foot .fit { font-size: 31px; }

.peek { height: 6px; flex: none; padding: 0 32px; overflow: hidden; }
.peek i { display: block; height: 48px; border-radius: 24px; background: #fceee4; }
.dock { height: 163px; flex: none; background: #f7f8fa; border-top: 2px solid #d5d7dc; display: flex; color: #666; font-size: 35px; }
.index { width: 275px; flex: none; padding: 8px 0 0; display: flex; flex-direction: column; }
.index .tri { margin-left: 127px; width: 22px; }
.big { font-size: 42px; line-height: 44px; margin: 12px 0 0 67px; color: #189518; align-self: flex-start; }
.index div { display: flex; align-items: center; line-height: 48px; padding-left: 41px; margin-top: 3px; }
.name { white-space: nowrap; flex: none; }
.index .pct { color: #189518; font-size: 37px; margin-left: 43px; }
.item { width: 201px; display: flex; flex-direction: column; align-items: center; padding-top: 8px; line-height: 50px; white-space: nowrap; }
.item span { margin-top: 12px; }
.home { height: 15px; flex: none; background: #f7f8fa; display: flex; justify-content: center; gap: 7px; padding-top: 4px; }
.home i { width: 245px; height: 7px; background: #bcbdbf; border-radius: 4px 0 0 4px; }
.home i:last-child { border-radius: 0 4px 4px 0; }
.home .mid { width: 337px; border-radius: 0; }
</style>
